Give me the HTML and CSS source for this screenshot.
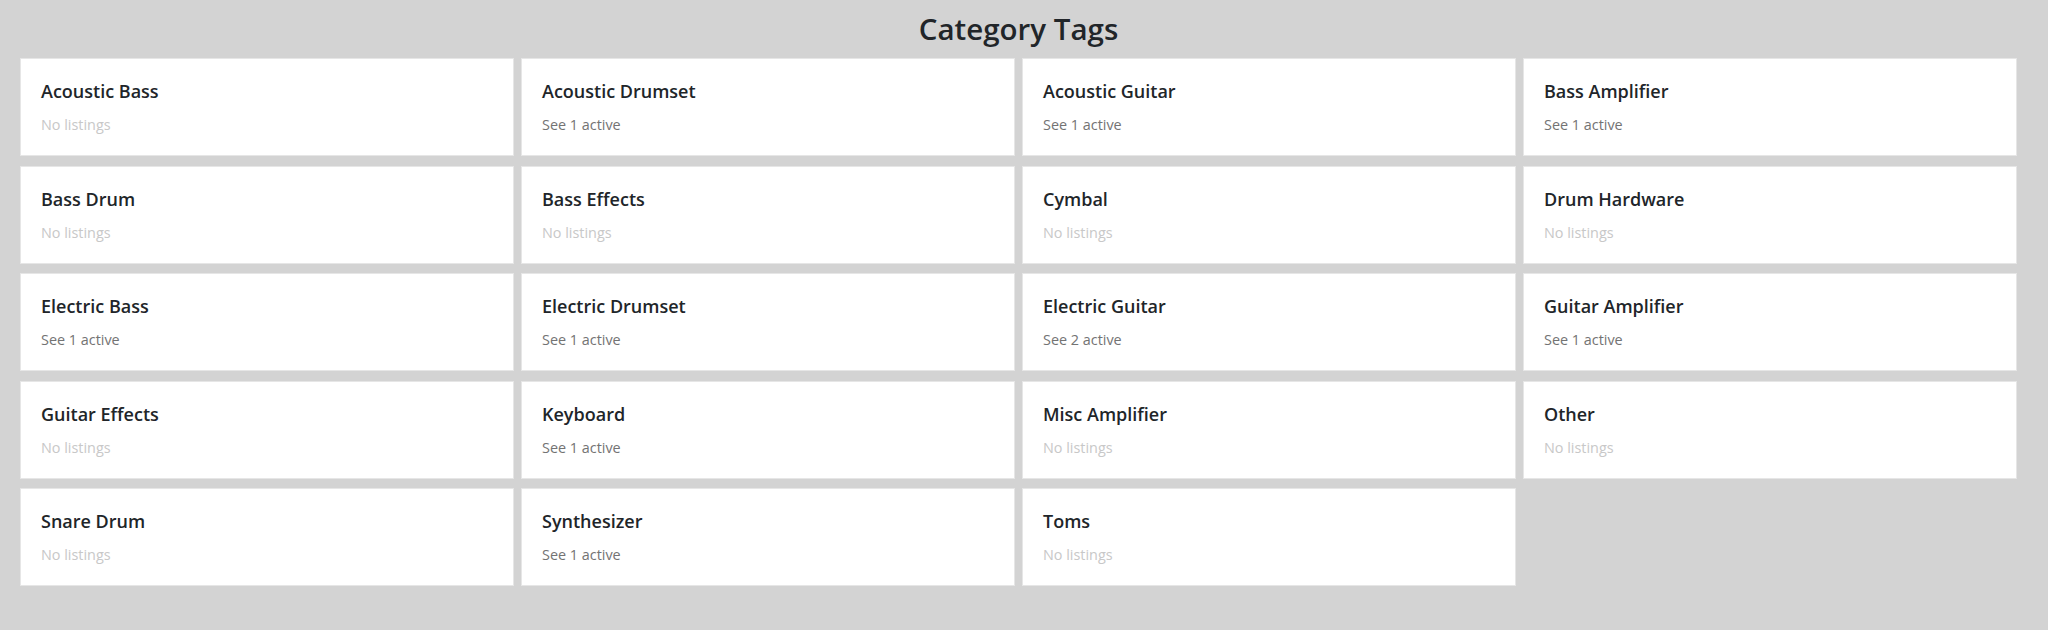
FILE: index.html
```html
<!DOCTYPE html>
<html lang="en">
<head>
<meta charset="utf-8">
<title>Category Tags</title>
<link rel="stylesheet" href="styles.css">
</head>
<body>
<main class="page">
  <h1 class="page-title">Category Tags</h1>
  <div class="tag-grid">
    <div class="tag-card"><div class="tag-name">Acoustic Bass</div><div class="tag-count empty">No listings</div></div>
    <div class="tag-card"><div class="tag-name">Acoustic Drumset</div><div class="tag-count">See 1 active</div></div>
    <div class="tag-card"><div class="tag-name">Acoustic Guitar</div><div class="tag-count">See 1 active</div></div>
    <div class="tag-card"><div class="tag-name">Bass Amplifier</div><div class="tag-count">See 1 active</div></div>
    <div class="tag-card"><div class="tag-name">Bass Drum</div><div class="tag-count empty">No listings</div></div>
    <div class="tag-card"><div class="tag-name">Bass Effects</div><div class="tag-count empty">No listings</div></div>
    <div class="tag-card"><div class="tag-name">Cymbal</div><div class="tag-count empty">No listings</div></div>
    <div class="tag-card"><div class="tag-name">Drum Hardware</div><div class="tag-count empty">No listings</div></div>
    <div class="tag-card"><div class="tag-name">Electric Bass</div><div class="tag-count">See 1 active</div></div>
    <div class="tag-card"><div class="tag-name">Electric Drumset</div><div class="tag-count">See 1 active</div></div>
    <div class="tag-card"><div class="tag-name">Electric Guitar</div><div class="tag-count">See 2 active</div></div>
    <div class="tag-card"><div class="tag-name">Guitar Amplifier</div><div class="tag-count">See 1 active</div></div>
    <div class="tag-card"><div class="tag-name">Guitar Effects</div><div class="tag-count empty">No listings</div></div>
    <div class="tag-card"><div class="tag-name">Keyboard</div><div class="tag-count">See 1 active</div></div>
    <div class="tag-card"><div class="tag-name">Misc Amplifier</div><div class="tag-count empty">No listings</div></div>
    <div class="tag-card"><div class="tag-name">Other</div><div class="tag-count empty">No listings</div></div>
    <div class="tag-card"><div class="tag-name">Snare Drum</div><div class="tag-count empty">No listings</div></div>
    <div class="tag-card"><div class="tag-name">Synthesizer</div><div class="tag-count">See 1 active</div></div>
    <div class="tag-card"><div class="tag-name">Toms</div><div class="tag-count empty">No listings</div></div>
  </div>
</main>
</body>
</html>
```

FILE: styles.css
```css
html, body {
  margin: 0;
  padding: 0;
  background: #d3d3d3;
}

body {
  font-family: "Open Sans", "Noto Sans", sans-serif;
  color: #212529;
}

.page {
  width: 1997px;
  padding-left: 20px;
  box-sizing: content-box;
}

.page-title {
  margin: 0;
  height: 58px;
  line-height: 58px;
  text-align: center;
  font-size: 29.5px;
  font-weight: 600;
  color: #212529;
}

.tag-grid {
  display: grid;
  grid-template-columns: repeat(4, 1fr);
  column-gap: 7px;
  row-gap: 9.5px;
}

.tag-card {
  height: 98px;
  box-sizing: border-box;
  background: #fff;
  border: 1px solid #e6e6e6;
  padding: 20px 20px 0 20px;
}

.tag-name {
  font-size: 18px;
  line-height: 24px;
  font-weight: 600;
  color: #212529;
}

.tag-count {
  margin-top: 12px;
  font-size: 14.4px;
  line-height: 20px;
  color: #737373;
}

.tag-count.empty {
  color: #c8c8c8;
}
```
